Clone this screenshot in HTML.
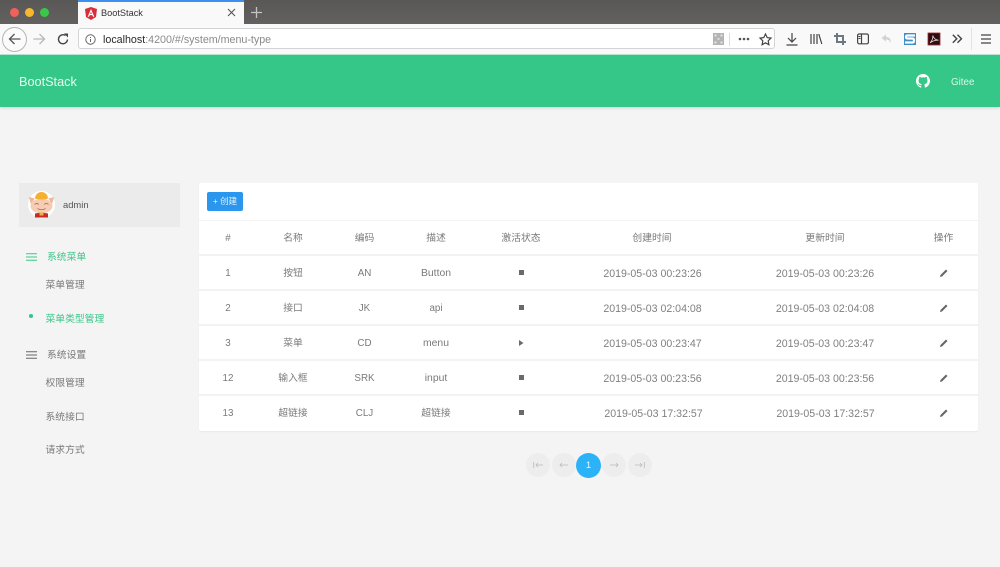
<!DOCTYPE html>
<html><head><meta charset="utf-8">
<style>
html,body{margin:0;padding:0;background:#f4f4f4}
body{width:1000px;height:567px;overflow:hidden;position:relative;font-family:"Liberation Sans","Noto Sans CJK SC",sans-serif;color:#6f6f6f;filter:blur(.3px)}
.a{position:absolute}
.t{position:absolute;white-space:nowrap;font-size:9.8px;line-height:14px;margin-top:1px;transform:translateX(-50%);color:#7a7a7a}
.d{font-size:10.6px;color:#808080}
.n{position:absolute;white-space:nowrap;font-size:9.8px;line-height:14px;margin-top:1px;color:#787878}
.line{position:absolute;left:199px;width:779px;height:1px;background:#f3f3f3}
.pg{position:absolute;top:453px;width:24px;height:24px;border-radius:50%;background:#ededed}
svg{position:absolute;overflow:visible}
</style></head><body>
<!-- tab bar -->
<div class="a" style="left:0;top:0;width:1000px;height:24px;background:linear-gradient(#595856,#636160)"></div>
<div class="a" style="left:9.500px;top:7.500px;width:9px;height:9px;border-radius:50%;background:#f2605a"></div>
<div class="a" style="left:24.500px;top:7.500px;width:9px;height:9px;border-radius:50%;background:#f8b82e"></div>
<div class="a" style="left:39.500px;top:7.500px;width:9px;height:9px;border-radius:50%;background:#38c948"></div>
<div class="a" style="left:78px;top:0;width:166px;height:24px;background:#f9f9fa"></div>
<div class="a" style="left:78px;top:0;width:166px;height:2px;background:#3d8fef"></div>
<svg style="left:85px;top:7px" width="12" height="13" viewBox="0 0 12 13"><path d="M6 0L0 2l1 8 5 3 5-3 1-8z" fill="#d92d3a"/><path d="M6 2L2.700 9.800h1.300l.7-1.700h2.600l.7 1.700h1.300zM5.200 7L6 4.800 6.800 7z" fill="#fff"/></svg>
<div class="a" style="left:101px;top:6px;font-size:9.200px;line-height:14px;color:#333;white-space:nowrap">BootStack</div>
<svg style="left:227px;top:8px" width="9" height="9"><path d="M1 1l7 7M8 1L1 8" stroke="#555" stroke-width="1.100" fill="none"/></svg>
<svg style="left:251px;top:7px" width="11" height="11"><path d="M5.500 0v11M0 5.500h11" stroke="#c4c3c2" stroke-width="1.300" fill="none"/></svg>
<!-- toolbar -->
<div class="a" style="left:0;top:24px;width:1000px;height:30px;background:#f9f9fa"></div>
<div class="a" style="left:0;top:54px;width:1000px;height:1px;background:#bfe8d5"></div>
<div class="a" style="left:2px;top:27px;width:23px;height:23px;border:1px solid #b5b5b7;border-radius:50%;background:#fbfbfc"></div>
<svg style="left:8px;top:33px" width="13" height="12"><path d="M12.500 6H1.500M6.500 1L1.500 6l5 5" stroke="#555" stroke-width="1.300" fill="none"/></svg>
<svg style="left:33px;top:33px" width="13" height="12"><path d="M.5 6h11M6.500 1l5 5-5 5" stroke="#b8b8b9" stroke-width="1.300" fill="none"/></svg>
<svg style="left:57px;top:33px" width="12" height="12"><path d="M10.500 6.500A4.500 4.500 0 1 1 8.500 2.500" stroke="#444" stroke-width="1.400" fill="none"/><path d="M7 .5h4v4z" fill="#444"/></svg>
<div class="a" style="left:78px;top:28px;width:697px;height:21px;box-sizing:border-box;background:#fff;border:1px solid #d4d4d6;border-radius:3px"></div>
<svg style="left:85px;top:34px" width="11" height="11"><circle cx="5.500" cy="5.500" r="4.700" stroke="#666" fill="none"/><path d="M5.500 5v3M5.500 3v1" stroke="#666" fill="none"/></svg>
<div class="a" style="left:103px;top:33px;font-size:10.700px;line-height:15px;color:#8a8a8a;white-space:nowrap"><span style="color:#2a2a2a">localhost</span>:4200/#/system/menu-type</div>
<svg style="left:713px;top:33px" width="11" height="12"><rect width="11" height="12" fill="#b4b4b4"/><path d="M1.500 1.500h2v2h-2zM7.500 1.500h2v2h-2zM1.500 8.500h2v2h-2zM7.500 8.500h2v2h-2zM4.600 5h1.800v1.800H4.600z" fill="#e4e4e4"/></svg>
<div class="a" style="left:729px;top:33px;width:1px;height:13px;background:#dcdcdd"></div>
<svg style="left:738px;top:37px" width="12" height="4"><g fill="#555"><circle cx="2" cy="2" r="1.300"/><circle cx="6" cy="2" r="1.300"/><circle cx="10" cy="2" r="1.300"/></g></svg>
<svg style="left:759px;top:33px" width="13" height="13" viewBox="0 0 13 13"><path d="M6.500 1l1.700 3.600 3.800.5-2.800 2.700.7 3.900-3.400-1.900-3.400 1.900.7-3.900L1 5.100l3.800-.5z" stroke="#444" stroke-width="1.200" fill="none"/></svg>
<svg style="left:786px;top:33px" width="12" height="13"><path d="M6 0v8.500M2 5l4 4 4-4M.5 12h11" stroke="#444" stroke-width="1.200" fill="none"/></svg>
<svg style="left:810px;top:33px" width="12" height="12"><path d="M1 1v10M4 1v10M7 1v10M8.800 1l3 10" stroke="#444" stroke-width="1.200" fill="none"/></svg>
<svg style="left:834px;top:33px" width="12" height="12"><path d="M3 0v9h9M0 3h9v9" stroke="#6b7a82" stroke-width="2" fill="none"/></svg>
<svg style="left:857px;top:33px" width="12" height="12"><rect x=".6" y="1" width="10.800" height="9.800" rx="1.500" stroke="#444" stroke-width="1.200" fill="none"/><path d="M4.500 1v9.800" stroke="#444" stroke-width="1.200"/><path d="M1.500 3h2v1h-2zM1.500 5h2v1h-2z" fill="#444"/></svg>
<svg style="left:881px;top:34px" width="11" height="11"><path d="M5 .5L.5 4 5 7.500V5.500c2.500 0 4 1 4.500 4 .8-3.500-.5-6.500-4.500-6.500z" fill="#d2d2d3"/></svg>
<svg style="left:904px;top:33px" width="12" height="12"><rect width="12" height="12" fill="#3f8fc8"/><path d="M11 2.500H3.500Q2 2.500 2 4t1.500 1.500h5Q10 5.500 10 7.500T8.500 9.500H1" stroke="#fff" stroke-width="2.200" fill="none"/></svg>
<svg style="left:928px;top:33px" width="12" height="12"><rect width="12" height="12" fill="#2a0f12" stroke="#a22626" stroke-width=".8"/><path d="M2 10c2-2 3-5 2.800-7.500C5.500 5 7 7 10.500 7.200 7.500 7 4.500 8 2 10z" stroke="#e9d4d4" stroke-width=".8" fill="none"/></svg>
<svg style="left:952px;top:34px" width="11" height="10"><path d="M.8.800l4 4-4 4M5.500.800l4 4-4 4" stroke="#444" stroke-width="1.400" fill="none"/></svg>
<div class="a" style="left:971px;top:28px;width:1px;height:22px;background:#e3e3e4"></div>
<svg style="left:981px;top:34px" width="10" height="10"><path d="M0 1h10M0 5h10M0 9h10" stroke="#444" stroke-width="1.300"/></svg>
<!-- navbar -->
<div class="a" style="left:0;top:55px;width:1000px;height:52px;background:#34c787;box-shadow:0 1px 3px rgba(0,0,0,.14)"></div>
<div class="a" style="left:19px;top:74px;font-size:12.700px;line-height:17px;color:#e6fbf1;white-space:nowrap">BootStack</div>
<svg style="left:916px;top:74px" width="14" height="14" viewBox="0 0 16 16"><path fill="#fff" d="M8 0C3.580 0 0 3.580 0 8c0 3.540 2.290 6.530 5.470 7.590.4.070.55-.17.55-.38 0-.19-.01-.82-.01-1.490-2.010.37-2.530-.49-2.690-.94-.09-.23-.48-.94-.82-1.130-.28-.15-.68-.52-.01-.53.630-.01 1.080.58 1.230.82.720 1.210 1.870.870 2.330.660.070-.520.280-.870.510-1.070-1.780-.200-3.640-.890-3.640-3.950 0-.870.310-1.590.820-2.150-.080-.200-.360-1.020.080-2.120 0 0 .670-.210 2.200.820.640-.180 1.320-.270 2-.270s1.360.090 2 .270c1.530-1.040 2.200-.820 2.200-.820.440 1.100.160 1.920.080 2.120.510.560.820 1.270.820 2.150 0 3.070-1.870 3.750-3.650 3.950.290.250.540.730.540 1.480 0 1.070-.010 1.930-.010 2.200 0 .210.150.460.550.380A8.010 8.010 0 0 0 16 8c0-4.420-3.580-8-8-8z"/></svg>
<div class="a" style="left:951px;top:76px;font-size:9.800px;line-height:14px;color:#dcf7ea;white-space:nowrap">Gitee</div>
<!-- user card -->
<div class="a" style="left:19px;top:183px;width:161px;height:44px;background:#ebebeb"></div>
<svg style="left:28px;top:191px" width="27" height="27" viewBox="0 0 27 27"><circle cx="13.500" cy="13.500" r="13.500" fill="#fff"/><path d="M.8 6l6 1.500L3 13z" fill="#f2b79a"/><path d="M26.200 6l-6 1.500L24 13z" fill="#f2b79a"/><ellipse cx="13.500" cy="15" rx="11" ry="7.500" fill="#f6ccb2"/><path d="M7 7.500C7 4 10 1 13.500 1S20 4 20 7.500c-3.500 1.300-9.500 1.300-13 0z" fill="#f6b02f"/><path d="M6.500 13.500q2.200-2.200 4.400 0M16.100 13.500q2.200-2.200 4.400 0M9.500 17.500q4 2.500 8 0" stroke="#b0705a" stroke-width=".8" fill="none"/><path d="M7 22.500l6.500-1 6.500 1v4h-13z" fill="#c92a26"/><rect x="11.500" y="21.500" width="4" height="3" fill="#e9b43c"/></svg>
<div class="a" style="left:63px;top:198px;font-size:9.400px;line-height:14px;color:#555;white-space:nowrap">admin</div>
<!-- sidebar -->
<svg style="left:26px;top:253px" width="11" height="8"><path d="M0 .700h11M0 4h11M0 7.300h11" stroke="#3fc78c" stroke-width="1"/></svg>
<div class="n" style="left:47px;top:250px;color:#3cc58a">系统菜单</div>
<div class="n" style="left:45.500px;top:278px">菜单管理</div>
<div class="a" style="left:29px;top:314px;width:3.500px;height:3.500px;border-radius:50%;background:#3cc58a"></div>
<div class="n" style="left:45.500px;top:312px;color:#3cc58a">菜单类型管理</div>
<svg style="left:26px;top:351px" width="11" height="8"><path d="M0 .700h11M0 4h11M0 7.300h11" stroke="#666" stroke-width="1"/></svg>
<div class="n" style="left:47px;top:348px">系统设置</div>
<div class="n" style="left:45.500px;top:376px">权限管理</div>
<div class="n" style="left:45.500px;top:410px">系统接口</div>
<div class="n" style="left:45.500px;top:443px">请求方式</div>
<!-- table card -->
<div class="a" style="left:199px;top:183px;width:779px;height:248px;background:#fff;border-radius:2px;box-shadow:0 1px 1px rgba(0,0,0,.05)"></div>
<div class="a" style="left:207px;top:192px;width:36px;height:19px;background:#2a96ee;border-radius:2px;color:#e8f4fe;font-size:8.500px;line-height:18px;text-align:center;white-space:nowrap">+ 创建</div>
<div class="line" style="top:220px"></div>
<div class="line" style="top:254px;height:2px"></div>
<div class="line" style="top:289px;height:2px"></div>
<div class="line" style="top:324px;height:2px"></div>
<div class="line" style="top:359px;height:2px"></div>
<div class="line" style="top:394px;height:2px"></div>
<div class="t" style="left:228px;top:231px">#</div><div class="t" style="left:293px;top:231px">名称</div><div class="t" style="left:364.500px;top:231px">编码</div><div class="t" style="left:436px;top:231px">描述</div><div class="t" style="left:521px;top:231px">激活状态</div><div class="t" style="left:652px;top:231px">创建时间</div><div class="t" style="left:825px;top:231px">更新时间</div><div class="t" style="left:943.500px;top:231px">操作</div>

<div class="t" style="left:228px;top:266px">1</div><div class="t" style="left:293px;top:266px">按钮</div><div class="t" style="left:364.500px;top:266px">AN</div><div class="t" style="left:436px;top:266px;font-size:10.400px">Button</div><div class="a" style="left:518.500px;top:270px;width:5px;height:5px;background:#6a6a6a"></div><div class="t d" style="left:652.500px;top:266px">2019-05-03 00:23:26</div><div class="t d" style="left:825px;top:266px">2019-05-03 00:23:26</div>
<div class="t" style="left:228px;top:301px">2</div><div class="t" style="left:293px;top:301px">接口</div><div class="t" style="left:364.500px;top:301px">JK</div><div class="t" style="left:436px;top:301px">api</div><div class="a" style="left:518.500px;top:305px;width:5px;height:5px;background:#6a6a6a"></div><div class="t d" style="left:652.500px;top:301px">2019-05-03 02:04:08</div><div class="t d" style="left:825px;top:301px">2019-05-03 02:04:08</div>
<div class="t" style="left:228px;top:336px">3</div><div class="t" style="left:293px;top:336px">菜单</div><div class="t" style="left:364.500px;top:336px">CD</div><div class="t" style="left:436px;top:336px;font-size:10.400px">menu</div><svg style="left:519px;top:340px" width="5" height="6"><path d="M0 0l4.500 3L0 6z" fill="#6a6a6a"/></svg><div class="t d" style="left:652.500px;top:336px">2019-05-03 00:23:47</div><div class="t d" style="left:825px;top:336px">2019-05-03 00:23:47</div>
<div class="t" style="left:228px;top:371px">12</div><div class="t" style="left:293px;top:371px">输入框</div><div class="t" style="left:364.500px;top:371px">SRK</div><div class="t" style="left:436px;top:371px;font-size:10.400px">input</div><div class="a" style="left:518.500px;top:375px;width:5px;height:5px;background:#6a6a6a"></div><div class="t d" style="left:652.500px;top:371px">2019-05-03 00:23:56</div><div class="t d" style="left:825px;top:371px">2019-05-03 00:23:56</div>
<div class="t" style="left:228px;top:406px">13</div><div class="t" style="left:293px;top:406px">超链接</div><div class="t" style="left:364.500px;top:406px">CLJ</div><div class="t" style="left:436px;top:406px">超链接</div><div class="a" style="left:518.500px;top:410px;width:5px;height:5px;background:#6a6a6a"></div><div class="t d" style="left:653.500px;top:406px">2019-05-03 17:32:57</div><div class="t d" style="left:825.500px;top:406px">2019-05-03 17:32:57</div>

<svg style="left:939.500px;top:268.500px" width="8" height="8"><path d="M0 8l.5-2L6 .5l1.500 1.500L2 7.500z" fill="#666"/></svg>
<svg style="left:939.500px;top:303.500px" width="8" height="8"><path d="M0 8l.5-2L6 .5l1.500 1.500L2 7.500z" fill="#666"/></svg>
<svg style="left:939.500px;top:338.500px" width="8" height="8"><path d="M0 8l.5-2L6 .5l1.500 1.500L2 7.500z" fill="#666"/></svg>
<svg style="left:939.500px;top:373.500px" width="8" height="8"><path d="M0 8l.5-2L6 .5l1.500 1.500L2 7.500z" fill="#666"/></svg>
<svg style="left:939.500px;top:408.500px" width="8" height="8"><path d="M0 8l.5-2L6 .5l1.500 1.500L2 7.500z" fill="#666"/></svg>
<!-- pagination -->
<div class="pg" style="left:526px"></div>
<svg style="left:533px;top:461px" width="10" height="8"><path d="M.7 1v6M10 4H3M5 2L3 4l2 2" stroke="#bbb" stroke-width=".8" fill="none"/></svg>
<div class="pg" style="left:551.500px"></div>
<svg style="left:559px;top:461px" width="9" height="8"><path d="M9 4H1M3 2L1 4l2 2" stroke="#bbb" stroke-width=".8" fill="none"/></svg>
<div class="a" style="left:576px;top:453px;width:25px;height:25px;border-radius:50%;background:#2bb2f7;color:#eaf7ff;font-size:9.500px;line-height:25px;text-align:center">1</div>
<div class="pg" style="left:602px"></div>
<svg style="left:610px;top:461px" width="9" height="8"><path d="M0 4h8M6 2l2 2-2 2" stroke="#bbb" stroke-width=".8" fill="none"/></svg>
<div class="pg" style="left:627.500px"></div>
<svg style="left:634.500px;top:461px" width="10" height="8"><path d="M9.300 1v6M0 4h7M5 2l2 2-2 2" stroke="#bbb" stroke-width=".8" fill="none"/></svg>
</body></html>
